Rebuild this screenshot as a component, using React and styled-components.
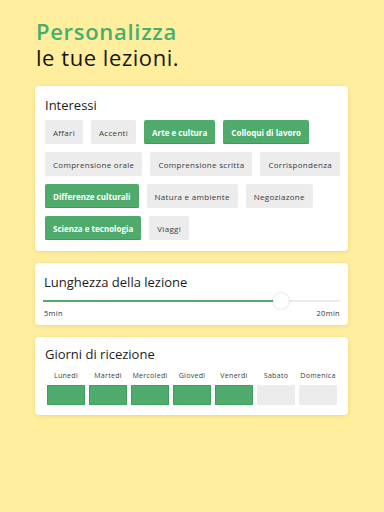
import styled, { createGlobalStyle } from "styled-components";

const GREEN = "#4fab6b";
const GREY = "#ececec";

const GlobalStyle = createGlobalStyle`
  html, body {
    margin: 0;
    padding: 0;
    background: #ffee9e;
  }
  body {
    font-family: "Open Sans", "Noto Sans", sans-serif;
    color: #1f1f1f;
  }
`;

const Page = styled.div`
  width: 384px;
  height: 512px;
  box-sizing: border-box;
  padding: 18px 36px 0 35px;
  display: flex;
  flex-direction: column;
  gap: 12px;
`;

const Heading = styled.h1`
  margin: 0 0 4px 1px;
  font-size: 22px;
  line-height: 26px;
  font-weight: 400;
  color: #161616;
  letter-spacing: 0.55px;
`;

const Accent = styled.span`
  display: block;
  color: #47ae6e;
  font-weight: 600;
  letter-spacing: 0.7px;
`;

const Card = styled.section`
  background: #fff;
  border-radius: 4px;
  box-shadow: 0 1px 4px rgba(150, 120, 20, 0.18);
  padding: ${(p) => p.$pad};
`;

const CardTitle = styled.h2`
  margin: 0;
  font-size: 13px;
  line-height: 18px;
  font-weight: 500;
  color: #1c1c1c;
`;

const Chips = styled.div`
  display: flex;
  flex-wrap: wrap;
  gap: 8px;
  margin-top: 6px;
`;

const Chip = styled.button`
  height: 24px;
  padding: 0 8px;
  border: none;
  border-radius: 2px;
  font-family: inherit;
  font-size: 8px;
  letter-spacing: ${(p) => (p.$on ? "0" : "0.3px")};
  font-weight: ${(p) => (p.$on ? 700 : 400)};
  color: ${(p) => (p.$on ? "#fff" : "#3a3a3a")};
  background: ${(p) => (p.$on ? GREEN : GREY)};
  box-shadow: ${(p) => (p.$on ? "inset 0 -1px 0 #3e9a5a" : "none")};
`;

const SliderTrack = styled.div`
  position: relative;
  height: 2px;
  margin: 9px 0 0 -1px;
  background: ${GREY};
`;

const SliderFill = styled.div`
  height: 100%;
  background: ${GREEN};
`;

const Thumb = styled.div`
  position: absolute;
  top: 50%;
  width: 16px;
  height: 16px;
  margin: -8px 0 0 -8px;
  border-radius: 50%;
  background: #fff;
  box-shadow: 0 0 2px rgba(0, 0, 0, 0.25);
`;

const Range = styled.div`
  display: flex;
  justify-content: space-between;
  margin-top: 6px;
  font-size: 7.5px;
  letter-spacing: 0.3px;
  color: #333;
`;

const Days = styled.div`
  display: grid;
  grid-template-columns: repeat(7, 38px);
  column-gap: 4px;
  margin: 8px 0 0 2px;
`;

const Day = styled.div`
  display: flex;
  flex-direction: column;
  align-items: center;
  gap: 4px;
`;

const DayLabel = styled.span`
  font-size: 7px;
  line-height: 10px;
  letter-spacing: 0.3px;
  color: #3c3c3c;
  white-space: nowrap;
`;

const DayBox = styled.div`
  width: 100%;
  height: 20px;
  border-radius: 1px;
  background: ${(p) => (p.$on ? GREEN : GREY)};
  box-shadow: ${(p) => (p.$on ? "inset 0 0 0 1px #3f9e5c" : "none")};
`;

const interests = [
  ["Affari", false],
  ["Accenti", false],
  ["Arte e cultura", true],
  ["Colloqui di lavoro", true],
  ["Comprensione orale", false],
  ["Comprensione scritta", false],
  ["Corrispondenza", false],
  ["Differenze culturali", true],
  ["Natura e ambiente", false],
  ["Negoziazone", false],
  ["Scienza e tecnologia", true],
  ["Viaggi", false],
];

const days = [
  ["Lunedì", true],
  ["Martedì", true],
  ["Mercoledì", true],
  ["Giovedì", true],
  ["Venerdì", true],
  ["Sabato", false],
  ["Domenica", false],
];

export default function App() {
  const length = 0.8;

  return (
    <>
      <GlobalStyle />
      <Page>
        <Heading>
          <Accent>Personalizza</Accent>
          le tue lezioni.
        </Heading>

        <Card $pad="10px 6px 11px 10px">
          <CardTitle>Interessi</CardTitle>
          <Chips>
            {interests.map(([label, on]) => (
              <Chip key={label} $on={on}>
                {label}
              </Chip>
            ))}
          </Chips>
        </Card>

        <Card $pad="10px 8px 7px 9px">
          <CardTitle>Lunghezza della lezione</CardTitle>
          <SliderTrack>
            <SliderFill style={{ width: `${length * 100}%` }} />
            <Thumb style={{ left: `${length * 100}%` }} />
          </SliderTrack>
          <Range>
            <span>5min</span>
            <span>20min</span>
          </Range>
        </Card>

        <Card $pad="8px 10px 10px 10px">
          <CardTitle>Giorni di ricezione</CardTitle>
          <Days>
            {days.map(([label, on]) => (
              <Day key={label}>
                <DayLabel>{label}</DayLabel>
                <DayBox $on={on} />
              </Day>
            ))}
          </Days>
        </Card>
      </Page>
    </>
  );
}
